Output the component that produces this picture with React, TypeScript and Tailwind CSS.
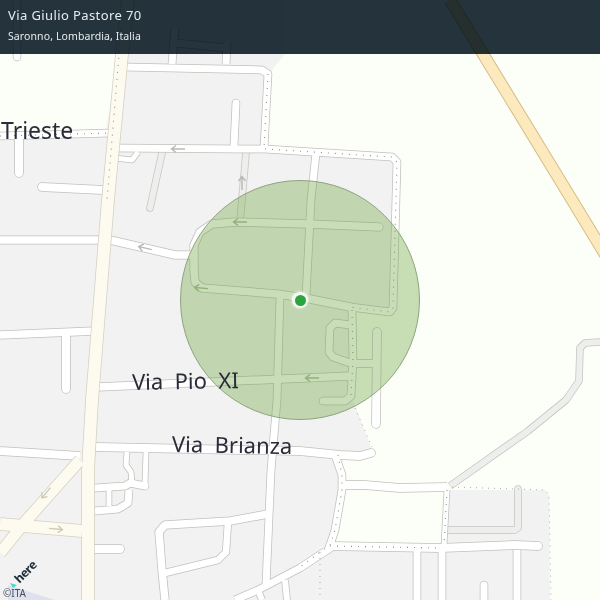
type Road = { p: string; w: number; cap?: "round" | "butt" };

const land = [
  "0,140 105,136 118,60 120,0 285,0 285,54 272,70 264,150 398,158 394,313 354,310 353,400 372,450 342,458 344,482 336,540 320,548 320,600 0,600",
  "450,490 545,490 549,495 550,600 320,600 320,548 444,548",
];

const service: Road[] = [
  { p: "246,153 240,222", w: 6 },
  { p: "162,153 150,208", w: 6, cap: "round" },
  { p: "450,486 528,431 566,400 579,381 580,348 585,343 600,342", w: 6 },
  { p: "518,489 518,528 515,530 447,530", w: 6, cap: "round" },
];

const white: Road[] = [
  { p: "0,136 110,133", w: 7 },
  { p: "19,136 19,173", w: 8, cap: "round" },
  { p: "17,0 17,57", w: 7, cap: "round" },
  { p: "42,187 103,190", w: 8, cap: "round" },
  { p: "125,67 262,70 268,74 264,148", w: 7 },
  { p: "116,148 240,149 265,149 392,157 397,162 393,308 390,312 350,307", w: 7 },
  { p: "236,103 234,146", w: 7, cap: "round" },
  { p: "175,27 172,64", w: 7 },
  { p: "227,42 226,64", w: 7 },
  { p: "175,43 227,48", w: 7 },
  { p: "115,158 132,160 138,152", w: 5 },
  { p: "379,227 308,224 235,222 212,224 200,232 194,245 194,270 195,282 202,288 277,294 305,298 350,307", w: 7.5, cap: "round" },
  { p: "110,240 175,255 193,255", w: 7.5 },
  { p: "0,240 103,240", w: 7.5 },
  { p: "0,335 95,331", w: 7.5 },
  { p: "66,335 66,389", w: 8, cap: "round" },
  { p: "98,387 350,376", w: 7.5 },
  { p: "352,310 353,360 351,396 345,401 323,401", w: 7, cap: "round" },
  { p: "350,325 335,323 330,328 329,352 333,357 350,363", w: 7 },
  { p: "353,363.5 377,363.5", w: 7 },
  { p: "377,332 376,424", w: 8, cap: "round" },
  { p: "316,153 311,200 306,296", w: 7 },
  { p: "280,296 277,400 271,470 266,585", w: 7 },
  { p: "95,447 300,451 340,455 360,456 371,453", w: 8, cap: "round" },
  { p: "0,451 80,456", w: 8 },
  { p: "95,549 120,549", w: 8, cap: "round" },
  { p: "127,452 126,465 131,472 132,483", w: 5 },
  { p: "146,452 145,484", w: 5 },
  { p: "95,488 125,486 130,483 145,486", w: 7, cap: "round" },
  { p: "129,490 128,503 118,509 95,511", w: 7 },
  { p: "109,488 109,506", w: 5 },
  { p: "268,514 230,521 165,525 159,532 162,570 165,600", w: 7.5 },
  { p: "228,522 226,552 218,560 165,573", w: 6.5 },
  { p: "335,545 300,568 258,590 235,600", w: 7 },
  { p: "285,580 287,600", w: 6 },
  { p: "258,590 262,600", w: 6 },
  { p: "335,455 342,475 342,490 335,530 330,545", w: 7 },
  { p: "343,485 365,485 400,488 447,487", w: 8 },
  { p: "447,490 444,545", w: 5 },
  { p: "330,546 440,548 515,545 538,546", w: 8, cap: "round" },
  { p: "417,550 417,600", w: 7 },
  { p: "442,550 442,600", w: 7 },
  { p: "517,550 517,600", w: 7 },
  { p: "484,585 484,600", w: 7, cap: "round" },
];

const cream: Road[] = [
  { p: "0,524 82,531", w: 12 },
  { p: "80,460 25,522 0,553", w: 11 },
  { p: "128,0 122,54 108,200 92,400 88,470 88,600", w: 12 },
];

const dots = [
  "0,136 110,133",
  "121,30 107,200",
  "268,74 264,148",
  "265,149 392,157 397,162 393,308 390,312 350,307",
  "352,310 353,360 351,396",
  "338,455 342,475 342,490 335,530 330,545 300,567",
  "447,490 444,545",
  "330,546 440,548",
];

const boundary = [
  "355,408 372,447",
  "452,487 545,490 549,495 551,600",
  "320,552 320,600",
];

const arrows: [number, number, number, string][] = [
  [178, 149, 0, "#b9b9b9"],
  [242, 183, 90, "#b9b9b9"],
  [240, 222, 0, "#a9b9a0"],
  [145, 248, 13, "#b9b9b9"],
  [201, 288, 5, "#a9b9a0"],
  [312, 378, 0, "#a9b9a0"],
  [46, 493, -50, "#cfcbb6"],
  [56, 529, 185, "#cfcbb6"],
];

function RoadLayer({ roads, casing, fill }: { roads: Road[]; casing: string; fill: string }) {
  return (
    <>
      {roads.map((r) => (
        <polyline key={"c" + r.p} points={r.p} fill="none" stroke={casing} strokeWidth={r.w + 1.5} strokeLinecap={r.cap ?? "butt"} strokeLinejoin="round" />
      ))}
      {roads.map((r) => (
        <polyline key={"f" + r.p} points={r.p} fill="none" stroke={fill} strokeWidth={r.w} strokeLinecap={r.cap ?? "butt"} strokeLinejoin="round" />
      ))}
    </>
  );
}

function MapDrawing() {
  return (
    <svg className="absolute inset-0" width={600} height={600} viewBox="0 0 600 600">
      {land.map((p) => (
        <polygon key={p} points={p} fill="#f3f2f2" />
      ))}
      <polygon points="8,585 55,600 8,600" fill="#dfe1ee" />
      <polyline points="450,0 483,54 572,200 620,279" fill="none" stroke="#d8bc86" strokeWidth={12.5} />
      <polyline points="450,0 483,54 572,200 620,279" fill="none" stroke="#fce9bd" strokeWidth={10.5} />
      <RoadLayer roads={service} casing="#c4c4c1" fill="#eeeeed" />
      <RoadLayer roads={white} casing="#c0c0bc" fill="#ffffff" />
      <RoadLayer roads={cream} casing="#d4d0c0" fill="#fdfaf0" />
      {dots.map((p) => (
        <polyline key={p} points={p} fill="none" stroke="#8d8d8d" strokeWidth={1.1} strokeDasharray="1 6" />
      ))}
      {boundary.map((p) => (
        <polyline key={p} points={p} fill="none" stroke="#a9a9a9" strokeWidth={1} strokeDasharray="1 5" />
      ))}
      {arrows.map(([x, y, a, c]) => (
        <path key={`${x}-${y}`} d="M7,0H-6M-2,-3.5L-6.5,0L-2,3.5" transform={`translate(${x} ${y}) rotate(${a})`} fill="none" stroke={c} strokeWidth={1.4} />
      ))}
      <circle cx={300} cy={300} r={119.5} fill="#69a03c" fillOpacity={0.36} stroke="#8ba57e" strokeWidth={1} />
      <polygon points="10,583 17,585 13,588" fill="#48dad0" />
    </svg>
  );
}

export default function App() {
  return (
    <div className="relative w-[600px] h-[600px] overflow-hidden bg-[#fcfff7] font-['Noto_Sans',sans-serif]">
      <MapDrawing />

      <span className="absolute left-[1px] top-[115px] text-[23px] leading-[30px] text-[#2a2c3a]">Trieste</span>
      <span className="absolute left-[132px] top-[365px] text-[22px] leading-[30px] text-[#2a2c3a] whitespace-pre -rotate-1">Via  Pio  XI</span>
      <span className="absolute left-[172px] top-[429px] text-[22px] leading-[30px] text-[#2a2c3a] whitespace-pre rotate-1">Via  Brianza</span>

      <div className="absolute left-[292px] top-[292px] w-4 h-4 rounded-full bg-[#f4f8f0] shadow-[0_0_3px_rgba(255,255,255,0.9)] flex items-center justify-center">
        <div className="w-[11px] h-[11px] rounded-full bg-[#2ba53c]" />
      </div>

      <span className="absolute left-[13px] top-[565px] -rotate-45 text-[12px] leading-[14px] font-bold tracking-[-0.5px] text-[#1c2b38]">here</span>
      <span className="absolute left-[3px] top-[587px] text-[10px] leading-[12px] text-[#44505a]">©ITA</span>

      <header className="absolute top-0 left-0 w-full h-[54px] text-[#e6ecef]">
        <div className="absolute inset-0 bg-[#25343e] mix-blend-multiply" />
        <div className="relative flex flex-col gap-[4px] px-2 pt-[6px]">
          <div className="text-[13px] leading-[18px] tracking-[0.4px]">Via Giulio Pastore 70</div>
          <div className="text-[10.5px] leading-[16px] tracking-[0.1px]">Saronno, Lombardia, Italia</div>
        </div>
      </header>
    </div>
  );
}
